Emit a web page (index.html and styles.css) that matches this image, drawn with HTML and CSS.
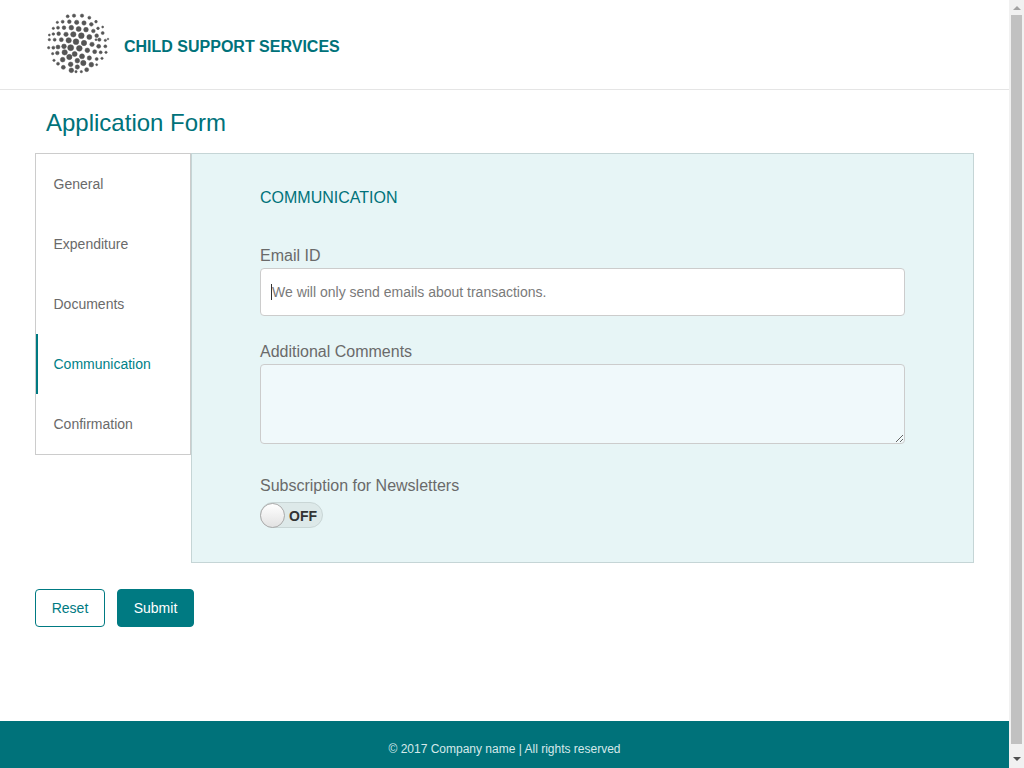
FILE: index.html
```html
<!DOCTYPE html>
<html lang="en">
<head>
    <meta charset="UTF-8">
    <title>Child Support Services</title>
    <link rel="stylesheet" href="styles.css">
</head>
<body>
    <div class="window">
    <header class="site-header">
        <svg class="logo" viewBox="48 42 192 186" width="64" height="62" fill="#555" stroke="#555" stroke-width="1.6">
            <circle cx="113" cy="52" r="4.5"/><circle cx="132" cy="50" r="5"/><circle cx="156" cy="50" r="5"/><circle cx="178" cy="56" r="4.5"/>
            <circle cx="82" cy="70" r="3.5"/><circle cx="98" cy="68" r="4.5"/><circle cx="118" cy="68" r="5.5"/><circle cx="140" cy="70" r="6.5"/><circle cx="162" cy="72" r="6.5"/><circle cx="184" cy="76" r="5.5"/><circle cx="198" cy="68" r="4"/>
            <circle cx="70" cy="88" r="3.5"/><circle cx="84" cy="86" r="4.5"/><circle cx="102" cy="86" r="5.5"/><circle cx="124" cy="86" r="7"/><circle cx="146" cy="90" r="7.5"/><circle cx="168" cy="92" r="7"/><circle cx="190" cy="96" r="5.5"/><circle cx="204" cy="88" r="4"/><circle cx="218" cy="84" r="3"/>
            <circle cx="58" cy="108" r="3"/><circle cx="70" cy="105" r="4"/><circle cx="86" cy="104" r="5.5"/><circle cx="108" cy="106" r="6.5"/><circle cx="130" cy="106" r="8"/><circle cx="154" cy="110" r="8.5"/><circle cx="178" cy="114" r="7.5"/><circle cx="200" cy="110" r="5.5"/><circle cx="218" cy="102" r="4.5"/>
            <circle cx="58" cy="122" r="3.5"/><circle cx="74" cy="122" r="4.5"/><circle cx="94" cy="122" r="6"/><circle cx="116" cy="124" r="8"/><circle cx="138" cy="128" r="8.5"/><circle cx="162" cy="132" r="8"/><circle cx="186" cy="136" r="6.5"/><circle cx="208" cy="122" r="5"/><circle cx="198" cy="122" r="3"/><circle cx="226" cy="124" r="3.5"/><circle cx="234" cy="120" r="2.5"/>
            <circle cx="56" cy="146" r="3.5"/><circle cx="70" cy="146" r="4.5"/><circle cx="84" cy="144" r="6"/><circle cx="102" cy="142" r="7"/><circle cx="122" cy="146" r="9"/><circle cx="148" cy="148" r="8.5"/><circle cx="172" cy="154" r="7"/><circle cx="194" cy="158" r="6"/><circle cx="206" cy="142" r="6"/><circle cx="226" cy="142" r="4.5"/>
            <circle cx="68" cy="164" r="3.5"/><circle cx="82" cy="162" r="5.5"/><circle cx="104" cy="160" r="8"/><circle cx="134" cy="165" r="7.5"/><circle cx="156" cy="172" r="7.5"/><circle cx="178" cy="177" r="6.5"/><circle cx="212" cy="160" r="4.5"/><circle cx="228" cy="160" r="3.5"/>
            <circle cx="72" cy="184" r="3.5"/><circle cx="98" cy="182" r="7"/><circle cx="118" cy="174" r="8"/><circle cx="142" cy="185" r="7"/><circle cx="160" cy="192" r="8"/><circle cx="184" cy="197" r="7"/><circle cx="200" cy="180" r="4.5"/><circle cx="216" cy="178" r="3.5"/>
            <circle cx="84" cy="194" r="4.5"/><circle cx="100" cy="205" r="6"/><circle cx="122" cy="196" r="7"/><circle cx="124" cy="214" r="7"/><circle cx="142" cy="204" r="6.5"/><circle cx="170" cy="212" r="6"/><circle cx="200" cy="197" r="3"/>
            <circle cx="138" cy="218" r="3.5"/><circle cx="154" cy="218" r="3.5"/>
        </svg>
        <span class="brand">CHILD SUPPORT SERVICES</span>
    </header>

    <main class="page">
        <h1 class="page-title">Application Form</h1>

        <div class="form-wrap">
            <nav class="steps">
                <a class="step" href="#general">General</a>
                <a class="step" href="#expenditure">Expenditure</a>
                <a class="step" href="#documents">Documents</a>
                <a class="step active" href="#communication">Communication</a>
                <a class="step" href="#confirmation">Confirmation</a>
            </nav>

            <form class="panel" id="communication">
                <h2 class="panel-title">COMMUNICATION</h2>

                <label class="field-label" for="email">Email ID</label>
                <div class="input-wrap">
                    <input class="field-input" type="email" id="email" placeholder="We will only send emails about transactions.">
                    <span class="caret"></span>
                </div>

                <label class="field-label" for="comments">Additional Comments</label>
                <textarea class="field-area" id="comments"></textarea>

                <div class="field-label">Subscription for Newsletters</div>
                <div class="toggle">
                    <span class="toggle-knob"></span>
                    <span class="toggle-text">OFF</span>
                </div>
            </form>
        </div>

        <div class="actions">
            <button class="btn btn-outline" type="reset">Reset</button>
            <button class="btn btn-solid" type="submit">Submit</button>
        </div>
    </main>

    <footer class="site-footer">
        <p>&copy; 2017 Company name | All rights reserved</p>
    </footer>
    </div>

    <div class="scrollbar">
        <span class="arrow-up"></span>
        <span class="thumb"></span>
        <span class="arrow-down"></span>
    </div>
</body>
</html>
```

FILE: styles.css
```css
html {
    overflow: hidden;
}
body {
    display: flex;
    height: 100vh;
    font-family: "Liberation Sans", Arial, sans-serif;
    margin: 0;
    padding: 0;
    overflow: hidden;
    background-color: #fff;
    color: #666;
}
.window {
    flex: 1;
    min-width: 0;
}
.scrollbar {
    display: flex;
    flex-direction: column;
    align-items: center;
    flex: none;
    width: 15px;
    background-color: #f1f1f1;
}
.thumb {
    width: 11px;
    height: 729px;
    margin-top: 5px;
    background-color: #c1c1c1;
}
.arrow-up {
    width: 0;
    height: 0;
    margin-top: 6px;
    border-left: 4px solid transparent;
    border-right: 4px solid transparent;
    border-bottom: 4px solid #a3a3a3;
}
.arrow-down {
    width: 0;
    height: 0;
    margin-top: 13px;
    border-left: 4px solid transparent;
    border-right: 4px solid transparent;
    border-top: 4px solid #505050;
}
.site-header {
    display: flex;
    align-items: center;
    height: 89px;
    padding-left: 46px;
    border-bottom: 1px solid #e5e5e5;
}
.logo {
    display: block;
    margin-top: -1px;
    margin-right: 14px;
    flex: none;
}
.brand {
    margin-top: 4px;
    font-size: 16px;
    font-weight: bold;
    color: #00727a;
}
.page {
    padding: 0 35px;
}
.page-title {
    margin: 0;
    padding: 15px 0 12px 11px;
    font-size: 24px;
    line-height: 36px;
    font-weight: normal;
    color: #00727a;
}
.form-wrap {
    display: flex;
    align-items: flex-start;
}
.steps {
    width: 156px;
    box-sizing: border-box;
    flex: none;
    border: 1px solid #ccc;
    background-color: #fff;
}
.step {
    display: block;
    height: 60px;
    line-height: 60px;
    padding-left: 15.5px;
    border-left: 2px solid transparent;
    font-size: 14px;
    color: #6a6a6a;
    text-decoration: none;
}
.step.active {
    border-left-color: #007a82;
    color: #007f87;
}
.panel {
    flex: 1;
    padding: 33px 68px 34px;
    border: 1px solid #c5d5d6;
    background-color: #e7f5f6;
}
.panel-title {
    margin: 0 0 36px;
    font-size: 16px;
    line-height: 22px;
    font-weight: normal;
    color: #00727a;
}
.field-label {
    display: block;
    margin-bottom: 2px;
    padding-top: 1px;
    font-size: 16px;
    line-height: 20px;
    color: #6a6a6a;
}
.input-wrap {
    position: relative;
    margin-bottom: 25px;
}
.caret {
    position: absolute;
    left: 11px;
    top: 16px;
    width: 1px;
    height: 16px;
    background-color: #333;
}
.field-input,
.field-area {
    display: block;
    width: 100%;
    box-sizing: border-box;
    border: 1px solid #ccc;
    border-radius: 4px;
    font-family: inherit;
    font-size: 14px;
    outline: none;
}
.field-input {
    height: 48px;
    padding: 0 11px;
    background-color: #fff;
}
.field-input::placeholder {
    color: #7a7a7a;
    opacity: 1;
}
.field-area {
    height: 80px;
    margin-bottom: 31px;
    background-color: #f0f9fb;
}
.toggle {
    display: flex;
    align-items: center;
    width: 63px;
    height: 26px;
    margin-top: 6px;
    box-sizing: border-box;
    border: 1px solid #c9d6d6;
    border-radius: 13px;
    background-color: #dde9e9;
}
.toggle-knob {
    width: 25px;
    height: 25px;
    margin: 0 0 0 -1px;
    box-sizing: border-box;
    flex: none;
    border: 1px solid #aaa;
    border-radius: 50%;
    background: linear-gradient(#fff, #e2e2e2);
}
.toggle-text {
    margin: 1px 0 0 4px;
    font-size: 14px;
    font-weight: bold;
    color: #333;
}
.actions {
    display: flex;
    gap: 12px;
    margin-top: 26px;
    margin-bottom: 94px;
}
.btn {
    height: 38px;
    border: 1px solid #007a82;
    border-radius: 4px;
    padding: 0;
    font-family: inherit;
    font-size: 14px;
}
.btn-outline {
    width: 70px;
    background-color: #fff;
    color: #007a82;
}
.btn-solid {
    width: 77px;
    background-color: #007a82;
    color: #fff;
}
.site-footer {
    height: 56px;
    background-color: #00727a;
    color: #d6e9ea;
    text-align: center;
    font-size: 12px;
}
.site-footer p {
    margin: 0;
    line-height: 56px;
}
```
